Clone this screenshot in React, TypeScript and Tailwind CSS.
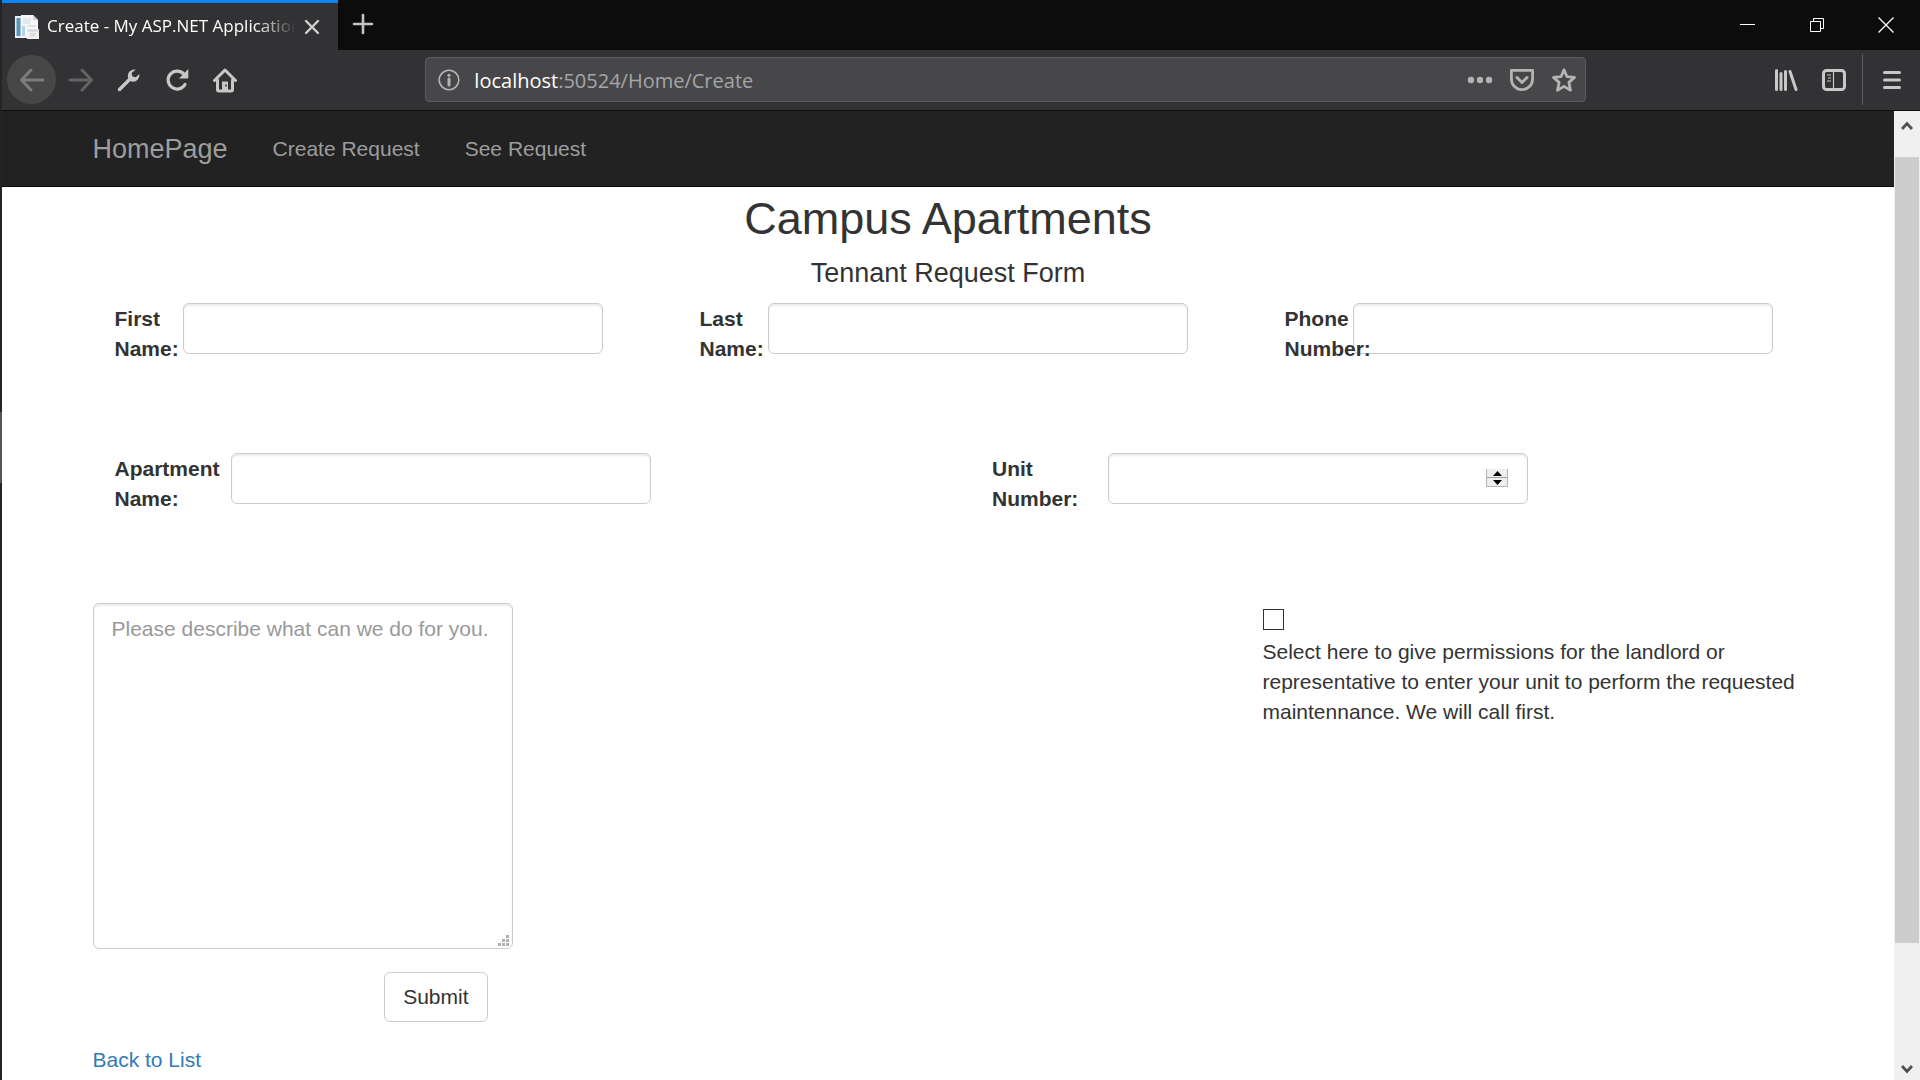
import type { ReactNode } from "react";

const inputClass =
  "h-[51px] w-[420px] shrink-0 rounded-md border border-[#ccc] bg-white px-[18px] text-[21px] text-[#555] shadow-[inset_0_2px_2px_rgba(0,0,0,0.075)] outline-none";

function ToolButton({ label, children }: { label: string; children: ReactNode }) {
  return (
    <button type="button" aria-label={label} className="flex h-12 w-12 shrink-0 items-center justify-center">
      {children}
    </button>
  );
}

function Arrow({ flip = false }: { flip?: boolean }) {
  return (
    <svg width="26" height="24" viewBox="0 0 26 24" fill="none" stroke={flip ? "#636364" : "#7c7c7d"} strokeWidth="3" strokeLinecap="round" strokeLinejoin="round" className={flip ? "-scale-x-100" : ""}>
      <path d="M24 12H3M12 2 2.500 12 12 22" />
    </svg>
  );
}

function TabStrip() {
  return (
    <header className="flex h-[50px] bg-[#0c0c0d] text-white">
      <div className="flex w-[336px] shrink-0 items-center border-t-[3px] border-[#0a84ff] bg-[#323234] pl-[13px]">
        <svg width="24" height="24" viewBox="0 0 24 24" className="shrink-0">
          <path d="M0 1h7v22H0z" fill="#e8f1f6" />
          <path d="M1.500 3h4v18h-4z" fill="#5795bd" />
          <path d="M6 0h12l5 5v18H6z" fill="#f4f6f7" />
          <path d="M18 0v5h5z" fill="#c9d1d6" />
          <path d="M8 3h8v6H8z" fill="#e2e9ed" />
          <path d="M7 11h3v10H7z" fill="#b7d3e3" />
          <path d="M12 14h12v10H12z" fill="#f0f0f0" />
          <path d="M12.500 14.500h11v2h-11z" fill="#cfd5d8" />
          <path d="M13 11h8M15 19h6M15 21h5" stroke="#c5cbce" />
        </svg>
        <span className="mb-[2px] ml-2 w-[249px] overflow-hidden whitespace-nowrap font-['Open_Sans',sans-serif] text-[17px] leading-6 [mask-image:linear-gradient(to_right,#000_84%,transparent)]">
          Create - My ASP.NET Application
        </span>
        <button type="button" aria-label="Close tab" className="flex h-8 w-8 shrink-0 items-center justify-center">
          <svg width="16" height="16" viewBox="0 0 16 16" stroke="#d0d0d1" strokeWidth="2.400" strokeLinecap="round">
            <path d="M2 2l12 12M14 2 2 14" />
          </svg>
        </button>
      </div>
      <button type="button" aria-label="New tab" className="flex h-12 w-[50px] items-center justify-center">
        <svg width="22" height="22" viewBox="0 0 22 22" stroke="#c4c4c5" strokeWidth="2.600" strokeLinecap="round">
          <path d="M11 2v18M2 11h18" />
        </svg>
      </button>
      <div className="ml-auto flex">
        <button type="button" aria-label="Minimize" className="flex w-[69px] items-center justify-center">
          <svg width="16" height="16" viewBox="0 0 16 16" stroke="#fff"><path d="M0 7.500h15" /></svg>
        </button>
        <button type="button" aria-label="Restore" className="flex w-[69px] items-center justify-center">
          <svg width="14" height="14" viewBox="0 0 14 14" fill="none" stroke="#fff">
            <path d="M.500 3.500h10v10h-10zM3.500 3.500v-3h10v10h-3" />
          </svg>
        </button>
        <button type="button" aria-label="Close window" className="flex w-[69px] items-center justify-center">
          <svg width="16" height="16" viewBox="0 0 16 16" stroke="#fff" strokeWidth="1.300"><path d="M.500.500l15 15M15.500.500l-15 15" /></svg>
        </button>
      </div>
    </header>
  );
}

function Toolbar() {
  return (
    <div className="flex h-[61px] items-center border-b border-[#0c0c0d] bg-[#323234] pb-px pl-[5px] pr-1">
      <button type="button" aria-label="Back" className="mr-px flex h-[49px] w-[49px] shrink-0 items-center justify-center rounded-full bg-[#474748]">
        <Arrow />
      </button>
      <ToolButton label="Forward"><Arrow flip /></ToolButton>
      <ToolButton label="Developer tools">
        <svg width="24" height="24" viewBox="0 0 24 24">
          <path d="M2.500 21.500 13 11" stroke="#c8c8c9" strokeWidth="3.400" strokeLinecap="round" />
          <path d="M18.800 1.600A6.500 6.500 0 0 0 11 9.300c.2 2.200 1.600 4.200 4.700 4.400 4 .2 6.900-3 6.700-7.600l-3.600 3.100-3.400-.8-.8-3.300z" fill="#c8c8c9" />
        </svg>
      </ToolButton>
      <ToolButton label="Reload">
        <svg width="24" height="24" viewBox="0 0 24 24" fill="none">
          <path d="M20 16.500A9 9 0 1 1 19 6.200" stroke="#c8c8c9" strokeWidth="3.200" strokeLinecap="round" />
          <path d="M23.300 1v8.500a1 1 0 0 1-1 1H14z" fill="#c8c8c9" />
        </svg>
      </ToolButton>
      <ToolButton label="Home">
        <svg width="26" height="26" viewBox="0 0 26 26" fill="none" stroke="#c8c8c9" strokeWidth="3" strokeLinecap="round" strokeLinejoin="round">
          <path d="M2.500 13.500 13 3l10.500 10.500M5.500 13v9.500a1.500 1.500 0 0 0 1.500 1.500h12a1.500 1.500 0 0 0 1.500-1.500V13" />
          <path d="M10 23v-8.500h6V23z" fill="#c8c8c9" stroke="none" />
          <circle cx="14" cy="18.500" r="1" fill="#323234" stroke="none" />
        </svg>
      </ToolButton>
      <div className="basis-0 grow-[2]" />
      <div className="flex h-[45px] basis-0 grow-[13] items-center rounded-sm border border-[#5c5c5e] bg-[#474749] pl-3">
        <svg width="22" height="22" viewBox="0 0 22 22" fill="none" className="shrink-0">
          <circle cx="11" cy="11" r="9.800" stroke="#b4b4b5" strokeWidth="1.600" />
          <circle cx="11" cy="6.300" r="1.600" fill="#b4b4b5" />
          <path d="M11 10v6" stroke="#b4b4b5" strokeWidth="3" strokeLinecap="round" />
        </svg>
        <div className="ml-[14px] grow whitespace-nowrap pt-[2px] font-['Open_Sans',sans-serif] text-[20px] leading-7 text-[#a5a5a6]">
          <span className="text-white">localhost</span>:50524/Home/Create
        </div>
        <button type="button" aria-label="Page actions" className="flex h-10 w-[42px] items-center justify-center">
          <svg width="26" height="8" viewBox="0 0 26 8" fill="#b4b4b5">
            <circle cx="4" cy="4" r="3.200" /><circle cx="13" cy="4" r="3.200" /><circle cx="22" cy="4" r="3.200" />
          </svg>
        </button>
        <button type="button" aria-label="Save to Pocket" className="flex h-10 w-[42px] items-center justify-center">
          <svg width="26" height="24" viewBox="0 0 26 24" fill="none" stroke="#b4b4b5" strokeWidth="2.800" strokeLinecap="round" strokeLinejoin="round">
            <path d="M2.400 2.400h21.200v8.600a10.600 10.600 0 0 1-21.200 0z" />
            <path d="m8 9.500 5 5 5-5" strokeWidth="3" />
          </svg>
        </button>
        <button type="button" aria-label="Bookmark this page" className="flex h-10 w-[42px] items-center justify-center">
          <svg width="26" height="26" viewBox="0 0 26 26" fill="none" stroke="#b4b4b5" strokeWidth="2.800" strokeLinejoin="round">
            <path d="m13 2.800 3 6.900 7.500.7-5.600 5 1.600 7.800L13 19.400l-6.500 3.800 1.600-7.800-5.600-5 7.500-.7z" />
          </svg>
        </button>
      </div>
      <div className="basis-0 grow-[2]" />
      <ToolButton label="Library">
        <svg width="24" height="24" viewBox="0 0 24 24" stroke="#c8c8c9" strokeWidth="3" strokeLinecap="round">
          <path d="M2.500 2.500v19M7 5.500v16M11.500 3.500v18M16 3.500l6 18" />
        </svg>
      </ToolButton>
      <ToolButton label="Sidebars">
        <svg width="24" height="22" viewBox="0 0 24 22" fill="none" stroke="#c8c8c9">
          <rect x="1.500" y="1.500" width="21" height="19" rx="3" strokeWidth="3" />
          <path d="M11.500 2v18" strokeWidth="1.200" />
          <path d="M5 6h4M6 9h3M5 12h4" strokeWidth="1.200" />
        </svg>
      </ToolButton>
      <div className="ml-1 mr-[5px] h-[51px] w-px bg-[#5c5c5e]" />
      <ToolButton label="Menu">
        <svg width="20" height="20" viewBox="0 0 20 20" stroke="#c8c8c9" strokeWidth="3" strokeLinecap="round">
          <path d="M2.500 2.500h15M2.500 10h15M2.500 17.500h15" />
        </svg>
      </ToolButton>
    </div>
  );
}

function Field({ id, label, wide = false, type = "text" }: { id: string; label: string; wide?: boolean; type?: string }) {
  return (
    <div className="flex items-start pl-11">
      <label htmlFor={id} className={(wide ? "w-[116px]" : "w-[68px]") + " relative z-10 shrink-0 pt-px font-bold"}>
        {label}
      </label>
      {type === "number" ? (
        <div className="relative">
          <input id={id} type="number" className={inputClass + " [appearance:textfield]"} />
          <div className="absolute right-5 top-4 flex h-[18px] w-[22px] flex-col border border-t-0 border-[#b5b5b5] bg-[#eee]">
            <button type="button" aria-label="Increase" className="flex flex-1 items-center justify-center">
              <svg width="9" height="5" viewBox="0 0 9 5"><path d="M4.500 0 9 5H0z" /></svg>
            </button>
            <div className="h-px bg-[#a0a0a0]" />
            <button type="button" aria-label="Decrease" className="flex flex-1 items-center justify-center">
              <svg width="9" height="5" viewBox="0 0 9 5"><path d="M4.500 5 9 0H0z" /></svg>
            </button>
          </div>
        </div>
      ) : (
        <input id={id} type={type} className={inputClass} />
      )}
    </div>
  );
}

function Scrollbar() {
  return (
    <div className="flex w-[26px] shrink-0 flex-col bg-[#f0f0f0] px-px">
      <div className="flex h-[46px] justify-center pt-[10px]">
        <svg width="12" height="10" viewBox="0 0 12 10" fill="none" stroke="#505050" strokeWidth="2.800"><path d="m1 8 5-5.500L11 8" /></svg>
      </div>
      <div className="grow-[6] basis-0 bg-[#cdcdcd]" />
      <div className="flex grow basis-0 items-end justify-center pb-[6px]">
        <svg width="12" height="10" viewBox="0 0 12 10" fill="none" stroke="#505050" strokeWidth="2.800"><path d="m1 2 5 5.500L11 2" /></svg>
      </div>
    </div>
  );
}

function RequestForm() {
  return (
    <form className="mx-auto max-w-[1755px] px-[22px] pt-[7px]">
      <h2 className="text-center text-[45px] leading-[50px]">Campus Apartments</h2>
      <h4 className="mt-[14px] text-center text-[27px] leading-[30px]">Tennant Request Form</h4>
      <div className="-mx-[22px] mt-[15px] grid h-[150px] grid-cols-3">
        <Field id="first-name" label="First Name:" />
        <Field id="last-name" label="Last Name:" />
        <Field id="phone" label="Phone Number:" type="tel" />
      </div>
      <div className="-mx-[22px] grid h-[150px] grid-cols-2">
        <Field id="apartment" label="Apartment Name:" wide />
        <Field id="unit" label="Unit Number:" wide type="number" />
      </div>
      <div className="-mx-[22px] grid grid-cols-3">
        <div className="px-[22px]">
          <div className="relative w-[420px]">
            <textarea
              aria-label="Request description"
              placeholder="Please describe what can we do for you."
              className="block h-[346px] w-full resize-none rounded-md border border-[#ccc] bg-white px-[18px] py-[10px] leading-[30px] text-[#555] shadow-[inset_0_2px_2px_rgba(0,0,0,0.075)] outline-none placeholder:text-[#999]"
            />
            <svg width="11" height="11" viewBox="0 0 11 11" fill="#b0b0b0" className="absolute bottom-[3px] right-[4px]">
              <path d="M8 0h3v3H8zM4 4h3v3H4zM8 4h3v3H8zM0 8h3v3H0zM4 8h3v3H4zM8 8h3v3H8z" />
            </svg>
          </div>
          <div className="mt-[23px] flex w-[420px] justify-end pr-[25px]">
            <button type="submit" className="rounded-md border border-[#ccc] bg-white px-[18px] py-[9px] leading-[30px]">
              Submit
            </button>
          </div>
        </div>
        <div className="col-start-3 px-[22px] pt-[6px]">
          <input id="permission" type="checkbox" className="block h-[21px] w-[21px] appearance-none border border-[#333] bg-white checked:bg-[#333]" />
          <label htmlFor="permission" className="mt-[7px] block">
            Select here to give permissions for the landlord or representative to enter your unit to perform the requested maintennance. We will call first.
          </label>
        </div>
      </div>
      <a href="#list" className="mt-[23px] inline-block text-[#337ab7]">Back to List</a>
    </form>
  );
}

export default function App() {
  return (
    <div className="flex min-h-screen bg-white">
      <div className="flex w-[2px] shrink-0 flex-col bg-[#242424]">
        <div className="grow-[412] basis-0" />
        <div className="grow-[71] basis-0 bg-[#555]" />
        <div className="grow-[597] basis-0" />
      </div>
      <div className="flex min-w-0 grow flex-col">
        <TabStrip />
        <Toolbar />
        <div className="flex grow">
          <main className="min-w-0 grow font-['Liberation_Sans',Arial,sans-serif] text-[21px] leading-[30px] text-[#333]">
            <nav className="border-b border-[#080808] bg-[#222] text-[#9d9d9d]">
              <div className="mx-auto flex h-[75px] max-w-[1755px] items-center gap-[45px] px-[22px]">
                <a href="#home" className="text-[27px]">HomePage</a>
                <a href="#create">Create Request</a>
                <a href="#requests">See Request</a>
              </div>
            </nav>
            <RequestForm />
          </main>
          <Scrollbar />
        </div>
      </div>
    </div>
  );
}
